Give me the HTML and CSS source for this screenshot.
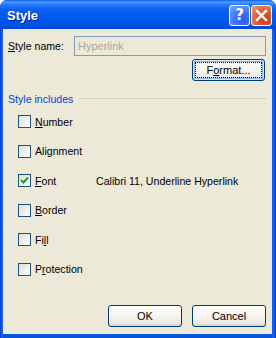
FILE: index.html
```html
<!DOCTYPE html>
<html lang="en">
<head>
    <meta charset="UTF-8">
    <meta name="viewport" content="width=device-width, initial-scale=1.0">
    <title>Style</title>
    <link rel="stylesheet" href="styles.css">
</head>
<body>
    <div class="window">
        <!-- Title bar -->
        <div class="titlebar">
            <span class="title">Style</span>
            <div class="caption-buttons">
                <button class="cap-btn help">?</button>
                <button class="cap-btn close">
                    <svg width="13" height="13" viewBox="0 0 13 13">
                        <path d="M2 2 L11 11 M11 2 L2 11" stroke="#fff" stroke-width="2.4" stroke-linecap="square"/>
                    </svg>
                </button>
            </div>
        </div>

        <div class="content">
            <div class="name-row">
                <label><u>S</u>tyle name:</label>
                <input type="text" class="name-input" value="Hyperlink" disabled />
            </div>
            <div class="format-row">
                <button class="btn focused"><span class="focus-rect">F<u>o</u>rmat...</span></button>
            </div>

            <div class="group-title">
                <span>Style includes</span>
                <div class="rule"></div>
            </div>

            <div class="includes">
                <div class="inc-row"><span class="check"></span><span><u>N</u>umber</span></div>
                <div class="inc-row"><span class="check"></span><span>Alignment</span></div>
                <div class="inc-row">
                    <span class="check">
                        <svg width="11" height="11" viewBox="0 0 11 11">
                            <path d="M2 5 L4.5 7.5 L9 2.5" stroke="#21a121" stroke-width="2" fill="none"/>
                        </svg>
                    </span>
                    <span class="inc-label"><u>F</u>ont</span>
                    <span class="desc">Calibri 11, Underline Hyperlink</span>
                </div>
                <div class="inc-row"><span class="check"></span><span><u>B</u>order</span></div>
                <div class="inc-row"><span class="check"></span><span>Fi<u>l</u>l</span></div>
                <div class="inc-row"><span class="check"></span><span>P<u>r</u>otection</span></div>
            </div>

            <div class="footer">
                <button class="btn">OK</button>
                <button class="btn">Cancel</button>
            </div>
        </div>
    </div>
</body>
</html>
```

FILE: styles.css
```css
body {
    margin: 0;
    font-family: "Liberation Sans", Arial, sans-serif;
    font-size: 10.6px;
    color: #000;
    background: #fff;
}
.window {
    width: 276px;
    height: 338px;
    display: flex;
    flex-direction: column;
    background: linear-gradient(to right, #0831d9 0px, #166aee 2px, #0855dd 3px, #0855dd 272px, #166aee 273px, #0831d9 276px);
    border-radius: 7px 7px 0 0;
    overflow: hidden;
}
.titlebar {
    height: 29px;
    flex: none;
    display: flex;
    align-items: center;
    justify-content: space-between;
    padding: 0 4px 0 7px;
    background: linear-gradient(to bottom, #0a5ce6 0px, #4a9dff 2px, #2276f8 5px, #0a5ff0 10px, #0058ee 18px, #0054e6 24px, #0049d4 29px);
}
.title {
    color: #fff;
    font-weight: bold;
    font-size: 13px;
    text-shadow: 1px 1px #0a1883;
    margin-top: 1px;
}
.caption-buttons {
    display: flex;
    gap: 1px;
    margin-top: 1px;
}
.cap-btn {
    width: 21px;
    height: 21px;
    padding: 0;
    border: 1px solid #fff;
    border-radius: 3px;
    display: flex;
    align-items: center;
    justify-content: center;
    color: #fff;
    font-family: "DejaVu Sans", sans-serif;
    font-weight: bold;
    font-size: 15px;
}
.help {
    background: radial-gradient(circle at 70% 75%, #2d5ff0 0%, #3d72f5 40%, #5f95fc 80%, #8ebaff 100%);
}
.close {
    background: radial-gradient(circle at 70% 75%, #c8401a 0%, #d65a30 40%, #e6805a 80%, #f3a288 100%);
}
.content {
    flex: 1;
    margin: 0 4px 4px 3px;
    background: #ece9d8;
    padding: 7px 6px 0 5px;
    display: flex;
    flex-direction: column;
}
.name-row {
    display: flex;
    align-items: center;
    justify-content: space-between;
    height: 20px;
}
.name-input {
    width: 192px;
    height: 20px;
    box-sizing: border-box;
    border: 1px solid #7f9db9;
    background: #ece9d8;
    color: #aca899;
    font-family: inherit;
    font-size: 11px;
    padding: 0 3px;
    margin: 0;
}
.format-row {
    display: flex;
    justify-content: flex-end;
    margin-top: 3px;
    padding-right: 1px;
}
.btn {
    width: 74px;
    height: 22px;
    box-sizing: border-box;
    border: 1px solid #003c74;
    border-radius: 3px;
    background: linear-gradient(to bottom, #ffffff 0%, #f5f4ef 50%, #eceae3 85%, #d6d0c5 100%);
    font-family: inherit;
    font-size: 11px;
    color: #000;
    padding: 0;
}
.btn.focused {
    width: 73px;
    box-shadow: inset 0 0 0 1px #cee7ff, inset 0 0 0 2px #98b8ea;
    padding: 2px;
}
.focus-rect {
    display: block;
    height: 100%;
    box-sizing: border-box;
    border: 1px dotted #000;
    line-height: 14px;
}
.group-title {
    display: flex;
    align-items: center;
    margin-top: 11px;
    color: #0046d5;
    height: 14px;
}
.group-title span {
    margin-right: 6px;
}
.rule {
    flex: 1;
    height: 1px;
    background: #d0d0bf;
    margin-top: -2px;
}
.includes {
    display: flex;
    flex-direction: column;
    padding-left: 10px;
    margin-top: 1px;
}
.inc-row {
    height: 29.5px;
    display: flex;
    align-items: center;
}
.check {
    width: 13px;
    height: 13px;
    box-sizing: border-box;
    border: 1px solid #1c5180;
    background: linear-gradient(135deg, #dcdcd7 0%, #f2f2ef 60%, #ffffff 100%);
    margin-right: 4px;
    display: flex;
    align-items: center;
    justify-content: center;
}
.inc-label {
    width: 61px;
}
.footer {
    margin-top: auto;
    margin-bottom: 7px;
    display: flex;
    justify-content: flex-end;
    gap: 10px;
}
```
